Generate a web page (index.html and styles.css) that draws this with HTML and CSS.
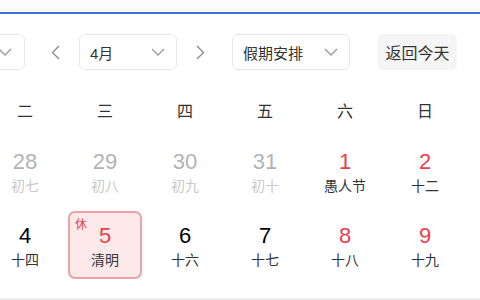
FILE: index.html
```html
<!DOCTYPE html>
<html lang="zh-CN">
<head>
  <meta charset="UTF-8"/>
  <meta name="viewport" content="width=device-width, initial-scale=1.0"/>
  <title>万年历</title>
  <link rel="stylesheet" href="styles.css">
</head>
<body>
  <div class="top-line"></div>

  <div class="calendar">
    <div class="toolbar">
      <div class="select year-select">
        <span class="year-label">2023年</span>
        <svg class="chev" width="14" height="8" viewBox="0 0 14 8"><polyline points="1,1 7,7 13,1"/></svg>
      </div>
      <a href="#" class="arrow prev">
        <svg width="9" height="15" viewBox="0 0 9 15"><polyline points="8,1 1.5,7.5 8,14"/></svg>
      </a>
      <div class="select month-select">
        <span>4月</span>
        <svg class="chev" width="14" height="8" viewBox="0 0 14 8"><polyline points="1,1 7,7 13,1"/></svg>
      </div>
      <a href="#" class="arrow next">
        <svg width="9" height="15" viewBox="0 0 9 15"><polyline points="1,1 7.5,7.5 1,14"/></svg>
      </a>
      <div class="select holiday-select">
        <span>假期安排</span>
        <svg class="chev" width="14" height="8" viewBox="0 0 14 8"><polyline points="1,1 7,7 13,1"/></svg>
      </div>
      <a href="#" class="today-btn">返回今天</a>
    </div>

    <!-- first column (Monday) sits left of the visible area -->
    <div class="week-head">
      <span class="hidden-col"></span><span>二</span><span>三</span><span>四</span><span>五</span><span>六</span><span>日</span>
    </div>

    <div class="days">
      <div class="day other hidden-col"></div>
      <div class="day other"><div class="day-box"><div class="num">28</div><div class="lunar">初七</div></div></div>
      <div class="day other"><div class="day-box"><div class="num">29</div><div class="lunar">初八</div></div></div>
      <div class="day other"><div class="day-box"><div class="num">30</div><div class="lunar">初九</div></div></div>
      <div class="day other"><div class="day-box"><div class="num">31</div><div class="lunar">初十</div></div></div>
      <div class="day weekend"><div class="day-box"><div class="num">1</div><div class="lunar">愚人节</div></div></div>
      <div class="day weekend"><div class="day-box"><div class="num">2</div><div class="lunar">十二</div></div></div>

      <div class="day hidden-col"></div>
      <div class="day"><div class="day-box"><div class="num">4</div><div class="lunar">十四</div></div></div>
      <div class="day rest"><div class="day-box"><span class="tag">休</span><div class="num">5</div><div class="lunar">清明</div></div></div>
      <div class="day"><div class="day-box"><div class="num">6</div><div class="lunar">十六</div></div></div>
      <div class="day"><div class="day-box"><div class="num">7</div><div class="lunar">十七</div></div></div>
      <div class="day weekend"><div class="day-box"><div class="num">8</div><div class="lunar">十八</div></div></div>
      <div class="day weekend"><div class="day-box"><div class="num">9</div><div class="lunar">十九</div></div></div>
    </div>
  </div>

  <div class="bottom-line"></div>
</body>
</html>
```

FILE: styles.css
```css
* { box-sizing: border-box; margin: 0; padding: 0; }
body {
  font-family: 'Liberation Sans', 'Noto Sans CJK SC', sans-serif;
  background: #fff;
  color: #333;
  width: 480px;
  height: 300px;
  overflow: hidden;
}

.top-line {
  height: 14px;
  background: #fbfbfb;
  border-bottom: 2px solid #3f6fd6;
}

.calendar {
  margin-left: -95px;
  width: 575px;
}

/* toolbar */
.toolbar {
  display: flex;
  align-items: center;
  height: 36px;
  margin-top: 20px;
  padding-left: 22px;
}
.select {
  display: flex;
  align-items: center;
  justify-content: space-between;
  height: 36px;
  padding: 0 11px 0 10px;
  border: 1px solid #e8e8e8;
  border-radius: 6px;
  font-size: 15px;
  color: #333;
  background: #fff;
}
.chev polyline {
  fill: none;
  stroke: #9a9a9a;
  stroke-width: 1.3;
}
.year-select { width: 98px; padding-right: 12px; }
.year-label { visibility: hidden; }
.month-select { width: 98px; margin-left: 14px; }
.holiday-select { width: 118px; margin-left: 22px; }

.arrow {
  display: flex;
  align-items: center;
  justify-content: center;
  width: 20px;
  height: 36px;
}
.arrow polyline {
  fill: none;
  stroke: #8c8c8c;
  stroke-width: 1.4;
}
.arrow.prev { margin-left: 20px; }
.arrow.next { margin-left: 13px; }

.today-btn {
  display: flex;
  align-items: center;
  justify-content: center;
  width: 79px;
  height: 36px;
  margin-left: 28px;
  border-radius: 6px;
  background: #f5f5f6;
  color: #333;
  font-size: 16px;
  text-decoration: none;
}

/* weekday header */
.week-head {
  display: grid;
  grid-template-columns: repeat(7, 80px);
  margin-top: 22px;
  height: 40px;
  line-height: 40px;
  text-align: center;
  font-size: 16px;
  color: #333;
}

/* day grid */
.days {
  display: grid;
  grid-template-columns: repeat(7, 80px);
  grid-auto-rows: 74px;
  margin-top: 2px;
}
.day { padding: 3px; }
.day-box {
  position: relative;
  height: 68px;
  padding-top: 12px;
  border: 1px solid transparent;
  border-radius: 7px;
  text-align: center;
}
.num {
  font-size: 22px;
  line-height: 24px;
  color: #000;
}
.lunar {
  margin-top: 2px;
  font-size: 14px;
  line-height: 20px;
  color: #333;
}

.day.other .num { color: #b3b3b3; }
.day.other .lunar { color: #c9c9c9; }
.day.weekend .num { color: #e8404a; }

.day.rest .day-box {
  background: #fde9ea;
  border: 2px solid #eea2a7;
  padding-top: 11px;
}
.day.rest .num { color: #e8404a; }
.day.rest .tag {
  position: absolute;
  top: 4px;
  left: 5px;
  font-size: 12px;
  line-height: 16px;
  color: #e8404a;
}

.bottom-line {
  margin-top: 16px;
  height: 2px;
  background: #ececec;
}
```
